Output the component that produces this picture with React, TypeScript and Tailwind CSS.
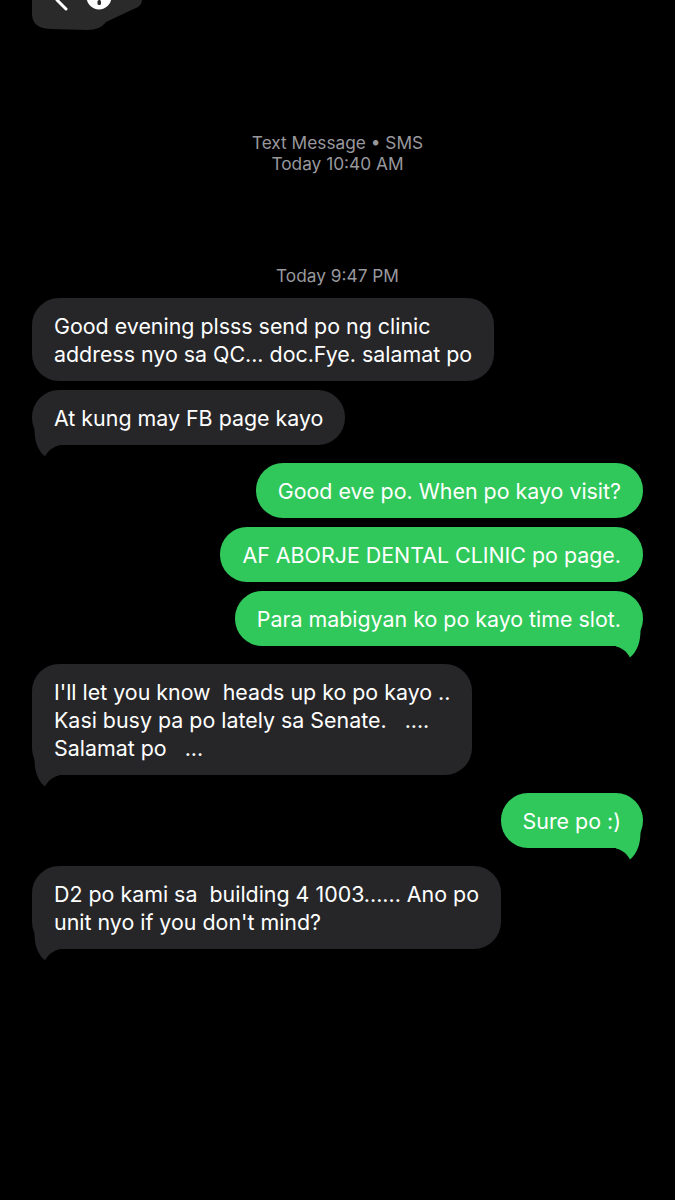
import React from "react";

type Msg = { from: "me" | "them"; lines: string[]; tail?: boolean };

const messages: Msg[] = [
  {
    from: "them",
    lines: ["Good evening plsss send po ng clinic", "address nyo sa QC... doc.Fye. salamat po"],
  },
  { from: "them", lines: ["At kung may FB page kayo"], tail: true },
  { from: "me", lines: ["Good eve po. When po kayo visit?"] },
  { from: "me", lines: ["AF ABORJE DENTAL CLINIC po page."] },
  { from: "me", lines: ["Para mabigyan ko po kayo time slot."], tail: true },
  {
    from: "them",
    lines: [
      "I'll let you know  heads up ko po kayo ..",
      "Kasi busy pa po lately sa Senate.   ....",
      "Salamat po   ...",
    ],
    tail: true,
  },
  { from: "me", lines: ["Sure po :)"], tail: true },
  {
    from: "them",
    lines: ["D2 po kami sa  building 4 1003...... Ano po", "unit nyo if you don't mind?"],
    tail: true,
  },
];

// bubble tail, drawn for the bottom-left corner and mirrored for sent messages
const Tail = ({ side, color }: { side: "left" | "right"; color: string }) => (
  <svg
    width="30"
    height="28"
    viewBox="0 -16 30 28"
    className={
      side === "left"
        ? "absolute left-0 -bottom-[12px]"
        : "absolute right-0 -bottom-[12px] -scale-x-100"
    }
  >
    <path d="M2.5 -16 C2.5 -4 5.5 5 13 11.5 C15.5 7 19 2.5 27 0.5 L28 -16 Z" fill={color} />
  </svg>
);

const Bubble = ({ msg }: { msg: Msg }) => {
  const me = msg.from === "me";
  const color = me ? "#30c85a" : "#262629";
  return (
    <div
      className={`relative rounded-[27px] px-[22px] py-[13.5px] text-[21.4px] leading-[28px] text-white whitespace-pre ${
        me ? "self-end bg-[#30c85a]" : "self-start bg-[#262629]"
      } ${msg.tail ? "mb-[18px]" : "mb-[9px]"}`}
    >
      {msg.lines.map((l, i) => (
        <div key={i}>{l}</div>
      ))}
      {msg.tail && <Tail side={me ? "right" : "left"} color={color} />}
    </div>
  );
};

export default function App() {
  return (
    <div
      className="relative w-[675px] h-[1200px] bg-black overflow-hidden"
      style={{ fontFamily: 'Inter, "Liberation Sans", Arial, sans-serif' }}
    >
      {/* cut-off header control at the top */}
      <svg width="160" height="34" viewBox="0 0 160 34" className="absolute left-0 top-0">
        <path
          d="M32 0 L32 14 Q32 28 50 29 L88 30 Q100 30 106 22 L138 7 Q142 4 142 0 Z"
          fill="#2a2a2b"
        />
        <path d="M57 0 L66 9" stroke="#fff" strokeWidth="3" strokeLinecap="round" />
        <circle cx="99" cy="-3" r="12.5" fill="#fff" />
        <rect x="97.5" y="0" width="3.5" height="5" rx="1.5" fill="#2a2a2b" />
      </svg>

      <div className="flex flex-col px-8 pt-[132px]">
        <div className="flex flex-col items-center text-[17.3px] leading-[21px] text-[#98989d]">
          <div>Text Message • SMS</div>
          <div>Today 10:40 AM</div>
        </div>
        <div className="mt-[91px] mb-[12px] text-center text-[17.3px] leading-[21px] text-[#98989d]">
          Today 9:47 PM
        </div>
        {messages.map((m, i) => (
          <Bubble key={i} msg={m} />
        ))}
      </div>
    </div>
  );
}
